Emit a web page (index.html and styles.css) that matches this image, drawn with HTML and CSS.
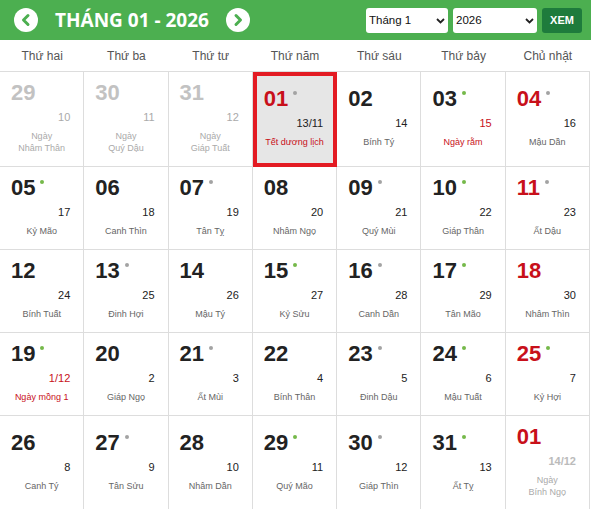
FILE: index.html
```html
<!DOCTYPE html>
<html lang="vi">
<head>
<meta charset="utf-8">
<title>Lịch tháng 01 - 2026</title>
<link rel="stylesheet" href="styles.css">
</head>
<body>
<div class="calendar">
  <header class="cal-header">
    <div class="nav">
      <button class="circle-btn" type="button" aria-label="Tháng trước">
        <svg width="24" height="24" viewBox="0 0 24 24"><path d="M14 7.5 L9.5 12 L14 16.5" fill="none" stroke="#4caf50" stroke-width="3" stroke-linecap="round" stroke-linejoin="round"/></svg>
      </button>
      <h1 class="title">THÁNG 01 - 2026</h1>
      <button class="circle-btn" type="button" aria-label="Tháng sau">
        <svg width="24" height="24" viewBox="0 0 24 24"><path d="M10 7.5 L14.5 12 L10 16.5" fill="none" stroke="#4caf50" stroke-width="3" stroke-linecap="round" stroke-linejoin="round"/></svg>
      </button>
    </div>
    <form class="picker">
      <div class="select-wrap month">
        <select><option>Tháng 1</option></select>
        <svg class="chev" width="9" height="6" viewBox="0 0 9 6"><path d="M1 1 L4.5 4.5 L8 1" fill="none" stroke="#222" stroke-width="1.8"/></svg>
      </div>
      <div class="select-wrap year">
        <select><option>2026</option></select>
        <svg class="chev" width="9" height="6" viewBox="0 0 9 6"><path d="M1 1 L4.5 4.5 L8 1" fill="none" stroke="#222" stroke-width="1.8"/></svg>
      </div>
      <button class="view-btn" type="button">XEM</button>
    </form>
  </header>

  <div class="weekdays">
    <div>Thứ hai</div><div>Thứ ba</div><div>Thứ tư</div><div>Thứ năm</div><div>Thứ sáu</div><div>Thứ bảy</div><div>Chủ nhật</div>
  </div>

  <div class="days">
    <div class="cell other"><div class="num">29</div><div class="lunar">10</div><div class="name">Ngày<br>Nhâm Thân</div></div>
    <div class="cell other"><div class="num">30</div><div class="lunar">11</div><div class="name">Ngày<br>Quý Dậu</div></div>
    <div class="cell other"><div class="num">31</div><div class="lunar">12</div><div class="name">Ngày<br>Giáp Tuất</div></div>
    <div class="cell today"><div class="num red">01<span class="dot grey"></span></div><div class="lunar">13/11</div><div class="name red">Tết dương lịch</div></div>
    <div class="cell"><div class="num">02</div><div class="lunar">14</div><div class="name">Bính Tý</div></div>
    <div class="cell"><div class="num">03<span class="dot green"></span></div><div class="lunar red">15</div><div class="name red">Ngày rằm</div></div>
    <div class="cell"><div class="num red">04<span class="dot grey"></span></div><div class="lunar">16</div><div class="name">Mậu Dần</div></div>

    <div class="cell"><div class="num">05<span class="dot green"></span></div><div class="lunar">17</div><div class="name">Kỷ Mão</div></div>
    <div class="cell"><div class="num">06</div><div class="lunar">18</div><div class="name">Canh Thìn</div></div>
    <div class="cell"><div class="num">07<span class="dot grey"></span></div><div class="lunar">19</div><div class="name">Tân Tỵ</div></div>
    <div class="cell"><div class="num">08</div><div class="lunar">20</div><div class="name">Nhâm Ngọ</div></div>
    <div class="cell"><div class="num">09<span class="dot grey"></span></div><div class="lunar">21</div><div class="name">Quý Mùi</div></div>
    <div class="cell"><div class="num">10<span class="dot green"></span></div><div class="lunar">22</div><div class="name">Giáp Thân</div></div>
    <div class="cell"><div class="num red">11<span class="dot grey"></span></div><div class="lunar">23</div><div class="name">Ất Dậu</div></div>

    <div class="cell"><div class="num">12</div><div class="lunar">24</div><div class="name">Bính Tuất</div></div>
    <div class="cell"><div class="num">13<span class="dot grey"></span></div><div class="lunar">25</div><div class="name">Đinh Hợi</div></div>
    <div class="cell"><div class="num">14</div><div class="lunar">26</div><div class="name">Mậu Tý</div></div>
    <div class="cell"><div class="num">15<span class="dot green"></span></div><div class="lunar">27</div><div class="name">Kỷ Sửu</div></div>
    <div class="cell"><div class="num">16<span class="dot grey"></span></div><div class="lunar">28</div><div class="name">Canh Dần</div></div>
    <div class="cell"><div class="num">17<span class="dot green"></span></div><div class="lunar">29</div><div class="name">Tân Mão</div></div>
    <div class="cell"><div class="num red">18</div><div class="lunar">30</div><div class="name">Nhâm Thìn</div></div>

    <div class="cell"><div class="num">19<span class="dot green"></span></div><div class="lunar red">1/12</div><div class="name red">Ngày mồng 1</div></div>
    <div class="cell"><div class="num">20</div><div class="lunar">2</div><div class="name">Giáp Ngọ</div></div>
    <div class="cell"><div class="num">21<span class="dot grey"></span></div><div class="lunar">3</div><div class="name">Ất Mùi</div></div>
    <div class="cell"><div class="num">22</div><div class="lunar">4</div><div class="name">Bính Thân</div></div>
    <div class="cell"><div class="num">23<span class="dot grey"></span></div><div class="lunar">5</div><div class="name">Đinh Dậu</div></div>
    <div class="cell"><div class="num">24<span class="dot green"></span></div><div class="lunar">6</div><div class="name">Mậu Tuất</div></div>
    <div class="cell"><div class="num red">25<span class="dot green"></span></div><div class="lunar">7</div><div class="name">Kỷ Hợi</div></div>

    <div class="cell"><div class="num">26</div><div class="lunar">8</div><div class="name">Canh Tý</div></div>
    <div class="cell"><div class="num">27<span class="dot grey"></span></div><div class="lunar">9</div><div class="name">Tân Sửu</div></div>
    <div class="cell"><div class="num">28</div><div class="lunar">10</div><div class="name">Nhâm Dần</div></div>
    <div class="cell"><div class="num">29<span class="dot green"></span></div><div class="lunar">11</div><div class="name">Quý Mão</div></div>
    <div class="cell"><div class="num">30<span class="dot grey"></span></div><div class="lunar">12</div><div class="name">Giáp Thìn</div></div>
    <div class="cell"><div class="num">31<span class="dot green"></span></div><div class="lunar">13</div><div class="name">Ất Tỵ</div></div>
    <div class="cell other next"><div class="num red">01</div><div class="lunar">14/12</div><div class="name">Ngày<br>Bính Ngọ</div></div>
  </div>
</div>
</body>
</html>
```

FILE: styles.css
```css
* { box-sizing: border-box; }

body {
  margin: 0;
  background: #fff;
  font-family: "Liberation Sans", Arial, sans-serif;
  color: #222;
}

.calendar { width: 591px; }

.cal-header {
  display: flex;
  align-items: center;
  justify-content: space-between;
  height: 40px;
  padding: 0 9px 0 14px;
  background: #4caf50;
}

.nav {
  display: flex;
  align-items: center;
  gap: 17px;
}

.circle-btn {
  width: 24px;
  height: 24px;
  padding: 0;
  border: 0;
  border-radius: 50%;
  background: #fff;
  display: flex;
  align-items: center;
  justify-content: center;
}

.title {
  margin: 0;
  color: #fff;
  font: 700 19px/1 "Open Sans", sans-serif;
}

.picker {
  display: flex;
  align-items: center;
  gap: 5px;
  margin: 0;
}

.select-wrap {
  position: relative;
  height: 25px;
}

.select-wrap select {
  appearance: none;
  -webkit-appearance: none;
  height: 25px;
  border: 0;
  border-radius: 3px;
  background: #fff;
  color: #111;
  font: 11.5px "Liberation Sans", Arial, sans-serif;
  padding: 0 0 0 3px;
}

.month select { width: 82px; }
.year select { width: 84px; }

.chev {
  position: absolute;
  right: 3px;
  top: 10px;
  pointer-events: none;
}

.view-btn {
  width: 40px;
  height: 25px;
  padding: 0;
  border: 0;
  border-radius: 3px;
  background: #1e7b3c;
  color: #fff;
  font: 700 11px "Liberation Sans", Arial, sans-serif;
}

.weekdays {
  display: grid;
  grid-template-columns: repeat(7, 1fr);
  width: 590px;
  height: 32px;
  border-bottom: 1px solid #ddd;
  align-items: center;
  text-align: center;
  font-size: 12px;
  color: #555;
}

.days {
  display: grid;
  grid-template-columns: repeat(7, 1fr);
  width: 590px;
}

.cell {
  display: flex;
  flex-direction: column;
  justify-content: center;
  padding: 9px 13px 12px 11px;
  border-right: 1px solid #ddd;
  border-bottom: 1px solid #ddd;
}

.num {
  display: flex;
  align-items: flex-start;
  font: 700 22px/24px "Liberation Sans", Arial, sans-serif;
  color: #222;
}

.dot {
  width: 4px;
  height: 4px;
  border-radius: 50%;
  margin: 4px 0 0 5px;
}
.dot.grey { background: #a3a3a3; }
.dot.green { background: #75b94a; }

.lunar {
  margin-top: 5px;
  font-size: 11px;
  line-height: 14px;
  text-align: right;
  color: #222;
}

.name {
  margin: 6px -2px 0 0;
  font-size: 9px;
  line-height: 12px;
  text-align: center;
  color: #666;
}

.red, .num.red, .lunar.red, .name.red { color: #c8101a; }

.other .num { color: #c2c2c2; }
.other .num.red { color: #c8101a; }
.other .lunar { color: #aaa; }
.other .name { color: #aaa; }
.next .lunar { font-weight: 700; color: #bbb; }

.today {
  background: #e6e6e6;
  outline: 4px solid #e31b23;
  outline-offset: -4px;
}
```
